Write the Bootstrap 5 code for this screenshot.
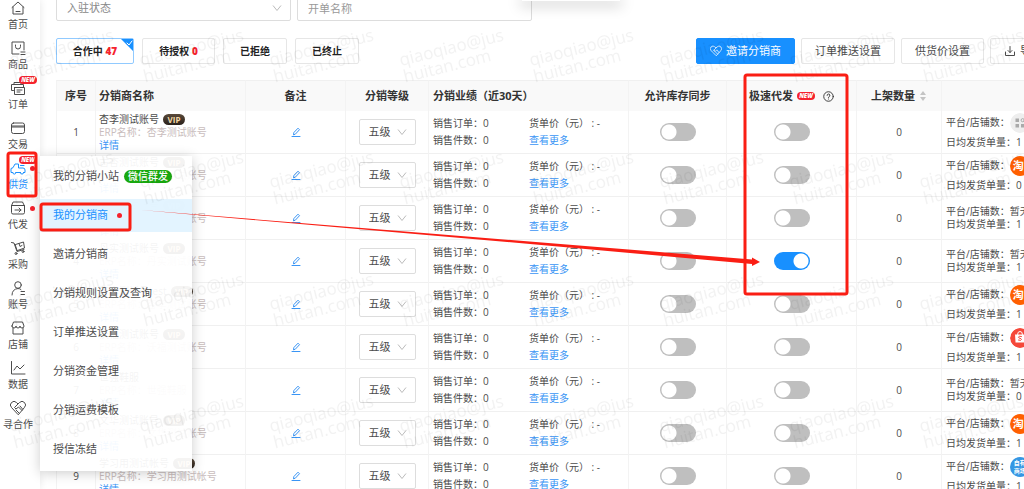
<!DOCTYPE html>
<html lang="zh-CN">
<head>
<meta charset="utf-8">
<meta name="viewport" content="width=device-width, initial-scale=1">
<title>我的分销商</title>
<link href="https://cdn.jsdelivr.net/npm/bootstrap@5.3.0/dist/css/bootstrap.min.css" rel="stylesheet">
<style>
  :root { --brand: #1890ff; --ink: #4c4c4c; --line: #f0f0f0; --alert: #f5222d; }
  body { font-family: "Open Sans", "Noto Sans CJK SC", sans-serif; font-size: 10px; color: var(--ink); background: #fff; }
  svg { display: block; fill: none; stroke: currentColor; stroke-linecap: round; stroke-linejoin: round; }
  a { color: #3a95f5; text-decoration: none; }

  /* left navigation */
  .side { width: 40px; box-shadow: 0 0 8px rgba(0,0,0,.1); z-index: 2; background: #fff; }
  .side a { height: 40px; width: 36px; gap: 1px; line-height: 14px; color: var(--ink); white-space: nowrap; }
  .side a.active { color: var(--brand); }
  .side svg { width: 16px; height: 16px; }
  .tag-new { background: var(--alert); color: #fff; border-radius: 4px; font-size: 6px; line-height: 8px; width: 18px; height: 8px; font-weight: 800; font-style: italic; text-align: center; }
  .side .tag-new { top: -4px; left: 19px; }
  .dot { width: 5px; height: 5px; border-radius: 50%; background: var(--alert); }
  .side .dot { top: 6px; left: 30px; }

  /* fly-out menu */
  .flyout { left: 40px; top: 156px; width: 152px; padding: 4px 0 5px; gap: 6px; background: rgba(255,255,255,.94); box-shadow: 0 2px 12px rgba(0,0,0,.2); z-index: 4; font-size: 11px; }
  .flyout a { height: 33px; padding-left: 13px; gap: 5px; color: var(--ink); }
  .flyout a.active { background: rgba(224,243,255,.9); color: var(--brand); }
  .tag-green { background: #18a80e; color: #fff; border-radius: 7px; font-size: 10px; line-height: 13px; padding: 0 4px; font-weight: 500; }

  /* page */
  .page { padding-left: 16px; }
  .sheet { width: calc(100% + 32px); }
  .filters { margin-top: -5px; gap: 6px; margin-bottom: 17px; }
  .filters .form-select, .filters .form-control { width: 235px; height: 26px; font-size: 11px; padding: 0 10px; border-color: #ddd; border-radius: 2px; color: #888; }
  .filters .form-control::placeholder { color: #999; }
  .form-select { --bs-form-select-bg-img: url("data:image/svg+xml,%3csvg xmlns='http://www.w3.org/2000/svg' viewBox='0 0 10 10'%3e%3cpath fill='none' stroke='%23bbb' d='M1 2.5l4 5 4-5'/%3e%3c/svg%3e"); background-size: 10px 10px; background-position: right 8px center; }
  .bar { margin-bottom: 16px; }
  .tab, .act { height: 26px; border: 1px solid #e6e6e6; border-radius: 2px; background: #fff; padding: 0; white-space: nowrap; }
  .tab { width: 64px; font-weight: 700; color: #222; }
  .tab.wide { width: 73px; }
  .tab.on { width: 78px; border-color: #91caff; }
  .tab b { color: var(--alert); }
  .corner { top: 0; right: 0; width: 12px; height: 12px; }
  .acts { gap: 6px; }
  .act { font-size: 11px; padding: 0 13px; color: var(--ink); }
  .act.main { background: var(--brand); border-color: var(--brand); color: #fff; }

  .grid { table-layout: fixed; width: 100%; border-collapse: separate; border-spacing: 0; }
  .grid th { height: 31px; background: #f9f9f9; border-top: 1px solid #f0f0f0; font-size: 11px; color: #333; padding: 0 4px; font-weight: 700; white-space: nowrap; }
  .grid td { height: 43px; padding: 0 4px; border-bottom: 1px solid var(--line); white-space: nowrap; overflow: hidden; }
  .grid th, .grid td { border-right: 1px solid #f3f3f3; }
  .grid tr > :first-child { border-left: 1px solid #f3f3f3; }
  .grid tr > :nth-child(2) { padding-left: 3px; }
  .who { line-height: 13px; height: 39px; }
  .who .erp { color: #c9bdbd; }
  .vip { background: linear-gradient(#5a4a3a, #2a211b); color: #f5d9a8; border-radius: 6px; font-size: 8px; line-height: 11px; width: 22px; text-align: center; font-weight: 700; }
  .sales { grid-template-columns: 96px 1fr; line-height: 17px; display: grid; }
  .grid .form-select { width: 57px; height: 26px; font-size: 11px; padding: 0 0 0 9px; border-color: #ddd; border-radius: 2px; color: var(--ink); }
  .toggle { appearance: none; width: 36px; height: 18px; border-radius: 9px; margin: 0; display: block; background: radial-gradient(circle at 9px 9px, #fff 7px, transparent 8px) #bfbfbf; }
  .toggle:checked { background: radial-gradient(circle at 27px 9px, #fff 7px, transparent 8px) var(--brand); }
  .shops { line-height: 13px; }
  .shops.tall { line-height: 19px; }
  .logo { width: 20px; height: 20px; border-radius: 50%; flex: none; font-size: 11px; line-height: 20px; color: #fff; font-weight: 700; padding-left: 3px; overflow: hidden; }
  .logo.drawn { padding: 0; }
  .logo.tao { background: #ff5f00; }
  .logo.mall { background: #3596e3; font-size: 6px; line-height: 8px; padding-top: 2px; padding-left: 4px; }

  /* layers over the page */
  .layer { position: fixed; inset: 0; width: 100%; height: 100%; pointer-events: none; z-index: 6; }
  .marks { z-index: 5; }
  .marks text { font: 17px "Open Sans", sans-serif; fill: #000; fill-opacity: .05; stroke: none; }
  .popup { left: 522px; top: 0; width: 98px; height: 1px; background: #fff; box-shadow: 0 2px 14px 2px rgba(0,0,0,.28); }
</style>
</head>
<body class="vh-100 overflow-hidden">
<div class="d-flex h-100">
  <nav class="side position-relative flex-shrink-0" id="side" aria-label="主导航"></nav>

  <main class="page flex-fill overflow-hidden">
    <div class="sheet">
      <div class="filters d-flex">
        <select class="form-select" aria-label="入驻状态"><option>入驻状态</option></select>
        <input class="form-control" placeholder="开单名称" aria-label="开单名称">
      </div>

      <div class="bar d-flex justify-content-between">
        <div class="d-flex gap-2">
          <button class="tab on position-relative">合作中 <b>47</b>
            <svg class="corner position-absolute" viewBox="0 0 12 12"><path d="M0 0H12V12Z" fill="#1890ff" stroke="none"/><path d="M6 4l2 2 3-4" stroke="#fff"/></svg>
          </button>
          <button class="tab wide">待授权 <b>0</b></button>
          <button class="tab">已拒绝</button>
          <button class="tab">已终止</button>
        </div>
        <div class="acts d-flex">
          <button class="act main d-flex align-items-center gap-1">
            <svg width="12" height="12" viewBox="0 0 16 16"><path d="M8 14L1.500 7.500a3.500 3.500 0 0 1 5-5L8 4l1.500-1.500a3.500 3.500 0 0 1 5 5ZM8 4L5 7l2 1.500 2-2L12 10M5 7l5 5"/></svg>邀请分销商</button>
          <button class="act">订单推送设置</button>
          <button class="act">供货价设置</button>
          <button class="act d-flex align-items-center gap-1">
            <svg width="12" height="12" viewBox="0 0 12 12"><path d="M6 1.500v6M4 5.500l2 2 2-2M1.500 7v3.500h9V7"/></svg>导出</button>
        </div>
      </div>

      <table class="grid">
        <colgroup><col style="width:40px"><col style="width:150px"><col style="width:100px"><col style="width:83px"><col style="width:200px"><col style="width:98px"><col style="width:130px"><col style="width:85px"><col></colgroup>
        <thead>
          <tr>
            <th class="text-center">序号</th><th>分销商名称</th><th class="text-center">备注</th><th class="text-center">分销等级</th>
            <th>分销业绩（近30天）</th><th class="text-center">允许库存同步</th>
            <th><div class="d-flex justify-content-center align-items-center gap-1">极速代发<span class="tag-new">NEW</span>
              <svg class="ms-1" width="11" height="11" viewBox="0 0 12 12"><circle cx="6" cy="6" r="5.200"/><path d="M4.500 4.800a1.500 1.500 0 1 1 2 1.400q-.5.2-.5.9M6 8.700v.1"/></svg></div></th>
            <th><div class="d-flex justify-content-center align-items-center gap-1">上架数量
              <svg width="8" height="12" viewBox="0 0 8 12"><path d="M1 5L4 1l3 4ZM1 7l3 4 3-4Z" fill="#c4c4c4" stroke="none"/></svg></div></th>
            <th></th>
          </tr>
        </thead>
        <tbody id="rows"></tbody>
      </table>
    </div>
  </main>
</div>

<div class="flyout position-absolute d-flex flex-column">
  <a href="#" class="d-flex align-items-center">我的分销小站<span class="tag-green">微信群发</span></a>
  <a href="#" class="d-flex align-items-center active">我的分销商<span class="dot ms-1"></span></a>
  <a href="#" class="d-flex align-items-center">邀请分销商</a>
  <a href="#" class="d-flex align-items-center">分销规则设置及查询</a>
  <a href="#" class="d-flex align-items-center">订单推送设置</a>
  <a href="#" class="d-flex align-items-center">分销资金管理</a>
  <a href="#" class="d-flex align-items-center">分销运费模板</a>
  <a href="#" class="d-flex align-items-center">授信冻结</a>
</div>

<div class="popup position-absolute"></div>

<svg class="layer marks" aria-hidden="true">
  <defs><pattern id="wm" width="130" height="122" x="8" y="-32" patternUnits="userSpaceOnUse">
    <g transform="translate(3 98) rotate(-14)"><text>qiaoqiao@jus</text><text y="17">huitan.com</text></g>
  </pattern></defs>
  <rect width="100%" height="100%" fill="url(#wm)" stroke="none"/>
</svg>

<!-- guide marks: where to click and which switch it leads to -->
<svg class="layer" aria-hidden="true">
  <g stroke="#fa1e14" stroke-width="3">
    <rect x="8" y="153" width="28" height="43" rx="2"/>
    <rect x="41" y="204" width="89" height="26" rx="2"/>
    <rect x="745" y="75" width="102" height="219" rx="2"/>
  </g>
  <path d="M141 210L752 259.500V257.500L760 262 752 266V264L530 244 300 224Z" fill="#fa1e14" stroke="none"/>
</svg>

<script>
  const icons = {
    home: '<path d="M2 7.500L8 2l6 5.500M3 7v7h10V7M6 11.500h4"/>',
    goods: '<path d="M9 14H2V2h12v8M5.500 5v1.500a2.500 2.500 0 0 0 5 0V5M11 12h4M11 14.500h4"/>',
    order: '<path d="M3.500 10.500H1.500V4.500h12v3M4 4.500v-2h7v2M4.500 7.500h10v7h-10V7.500M7 10h5M7 12h3"/>',
    trade: '<rect x="1.500" y="3" width="13" height="10.500" rx="2"/><path d="M2 6h12M2 7h12"/>',
    supply: '<path d="M2.500 12.500H1V8.500l2-.8 2-3.700h3.500v4H13q2 0 2 2v2.500h-1.500M6 12.500h4.500M10.500 5.500H14"/><path d="M2.700 12.500a1.600 1.600 0 0 0 3.200 0M10.400 12.500a1.600 1.600 0 0 0 3.200 0"/>',
    agent: '<path d="M1.500 6V12.500q0 1.500 1.500 1.500h10q1.500 0 1.500-1.500V6L12.500 2h-9ZM1.500 5.500h13M5 10h6M9 8l2 2-2 2"/>',
    buy: '<path d="M1.500 2.500L4 3l3 8.500 7-2M5.500 4.500l8-2.500 1 6-7 2.500ZM9 3.500l1 3 2-1"/><circle cx="6" cy="13.500" r="1"/><circle cx="13" cy="11.500" r="1"/>',
    user: '<circle cx="8" cy="5" r="3.300"/><path d="M2 15q0-6 6-6.500M11 11.500h3.500M11 14.500h3.500M8 8.500q2 0 3 1"/>',
    shop: '<path d="M3 8v6h10V8M2 6l1.500-4h9L14 6q0 2-2 2t-2-2q0 2-2 2T6 6q0 2-2 2T2 6Z"/>',
    data: '<path d="M1.500 1.500V14h13.500M4 10l3-4 3 3 4-4"/>',
    coop: '<path d="M8 14.500L1.500 7.500a3.500 3.500 0 0 1 5-5L8 4l1.500-1.500a3.500 3.500 0 0 1 5 5ZM8 4L4.500 7.500 6 9l2.500-2L12 10.500M6 10l3 3M10 6l2.500 3"/>'
  };
  const badge = '<span class="tag-new position-absolute">NEW</span>', dot = '<span class="dot position-absolute"></span>';
  const nav = [['home','首页'],['goods','商品'],['order','订单',badge],['trade','交易'],['supply','供货',badge+dot,'active'],['agent','代发',dot],['buy','采购'],['user','账号'],['shop','店铺'],['data','数据'],['coop','寻合作']];
  document.getElementById('side').innerHTML = nav.map(([i, t, extra = '', c = '']) =>
    `<a href="#" class="d-flex flex-column align-items-center position-relative ${c}"><svg viewBox="0 0 16 16">${icons[i]}</svg>${t}${extra}</a>`).join('');

  const logos = {
    tao: '<span class="logo tao">淘</span>',
    grey: '<svg class="logo drawn" viewBox="0 0 20 20"><circle cx="10" cy="10" r="10" fill="#eee" stroke="none"/><path d="M5.500 5.500h3.500v3.500H5.500ZM5.500 11h3.500v3.500H5.500ZM11 11h3.500v3.500H11Z" fill="#aaa" stroke="none"/><circle cx="12.700" cy="7.200" r="1.600" stroke="#aaa"/></svg>',
    bag: '<svg class="logo drawn" viewBox="0 0 20 20"><circle cx="10" cy="10" r="10" fill="#f5483a" stroke="none"/><path d="M5 6.500h10l-.5 8h-9Z" fill="#fff" stroke="none"/><path d="M7.500 6.500q0-3 2.500-3t2.500 3" stroke="#fff"/><path d="M11.500 8.500q-3-1-3 .7c0 1.500 3 .8 3 2.300q0 1.500-3 .6" stroke="#f5483a"/></svg>',
    mall: '<span class="logo mall">自有<br>商场</span>'
  };
  const rows = [
    ['杏李测试账号', 1, 'grey', 1], ['古杏测试账号', 1, 'tao', 0], ['沐林测试账号', 1, '', 1], ['丹实测试账号', 1, '', 1],
    ['杏李测试号test', 1, 'tao', 1, '杏李测试账号'], ['沃福测试账号', 1, 'bag', 1], ['世强鞋服', 0, '', 0], ['文华测试账号', 1, 'tao', 1], ['学习用测试帐号', 1, 'mall', 1]
  ];
  document.getElementById('rows').innerHTML = rows.map(([name, vip, logo, daily, erp], i) => `
    <tr>
      <td class="text-center">${i + 1}</td>
      <td><div class="who"><div class="d-flex align-items-center gap-1">${name}${vip ? '<span class="vip">VIP</span>' : ''}</div><div class="erp">ERP名称：${erp || name}</div><a href="#" class="d-block">详情</a></div></td>
      <td><a href="#" aria-label="编辑备注" class="d-flex justify-content-center"><svg width="10" height="10" viewBox="0 0 10 10"><path d="M1 9.500h8M2.500 7.500l.4-2L7 1.200l1.500 1.500L4.500 7Z"/></svg></a></td>
      <td><select class="form-select mx-auto" aria-label="分销等级"><option>五级</option></select></td>
      <td><div class="sales"><span>销售订单：0</span><span>货单价（元） : -</span><span>销售件数：0</span><a href="#">查看更多</a></div></td>
      <td><input type="checkbox" role="switch" class="toggle mx-auto" aria-label="允许库存同步"></td>
      <td><input type="checkbox" role="switch" class="toggle mx-auto" aria-label="极速代发" ${i === 3 ? 'checked' : ''}></td>
      <td class="text-center">0</td>
      <td><div class="shops ${logo ? 'tall' : ''}"><div class="d-flex align-items-center">平台/店铺数：${logo ? logos[logo] : '暂无'}</div><div>日均发货单量：${daily}</div></div></td>
    </tr>`).join('');
</script>
<script src="https://cdn.jsdelivr.net/npm/bootstrap@5.3.0/dist/js/bootstrap.bundle.min.js"></script>
</body>
</html>
